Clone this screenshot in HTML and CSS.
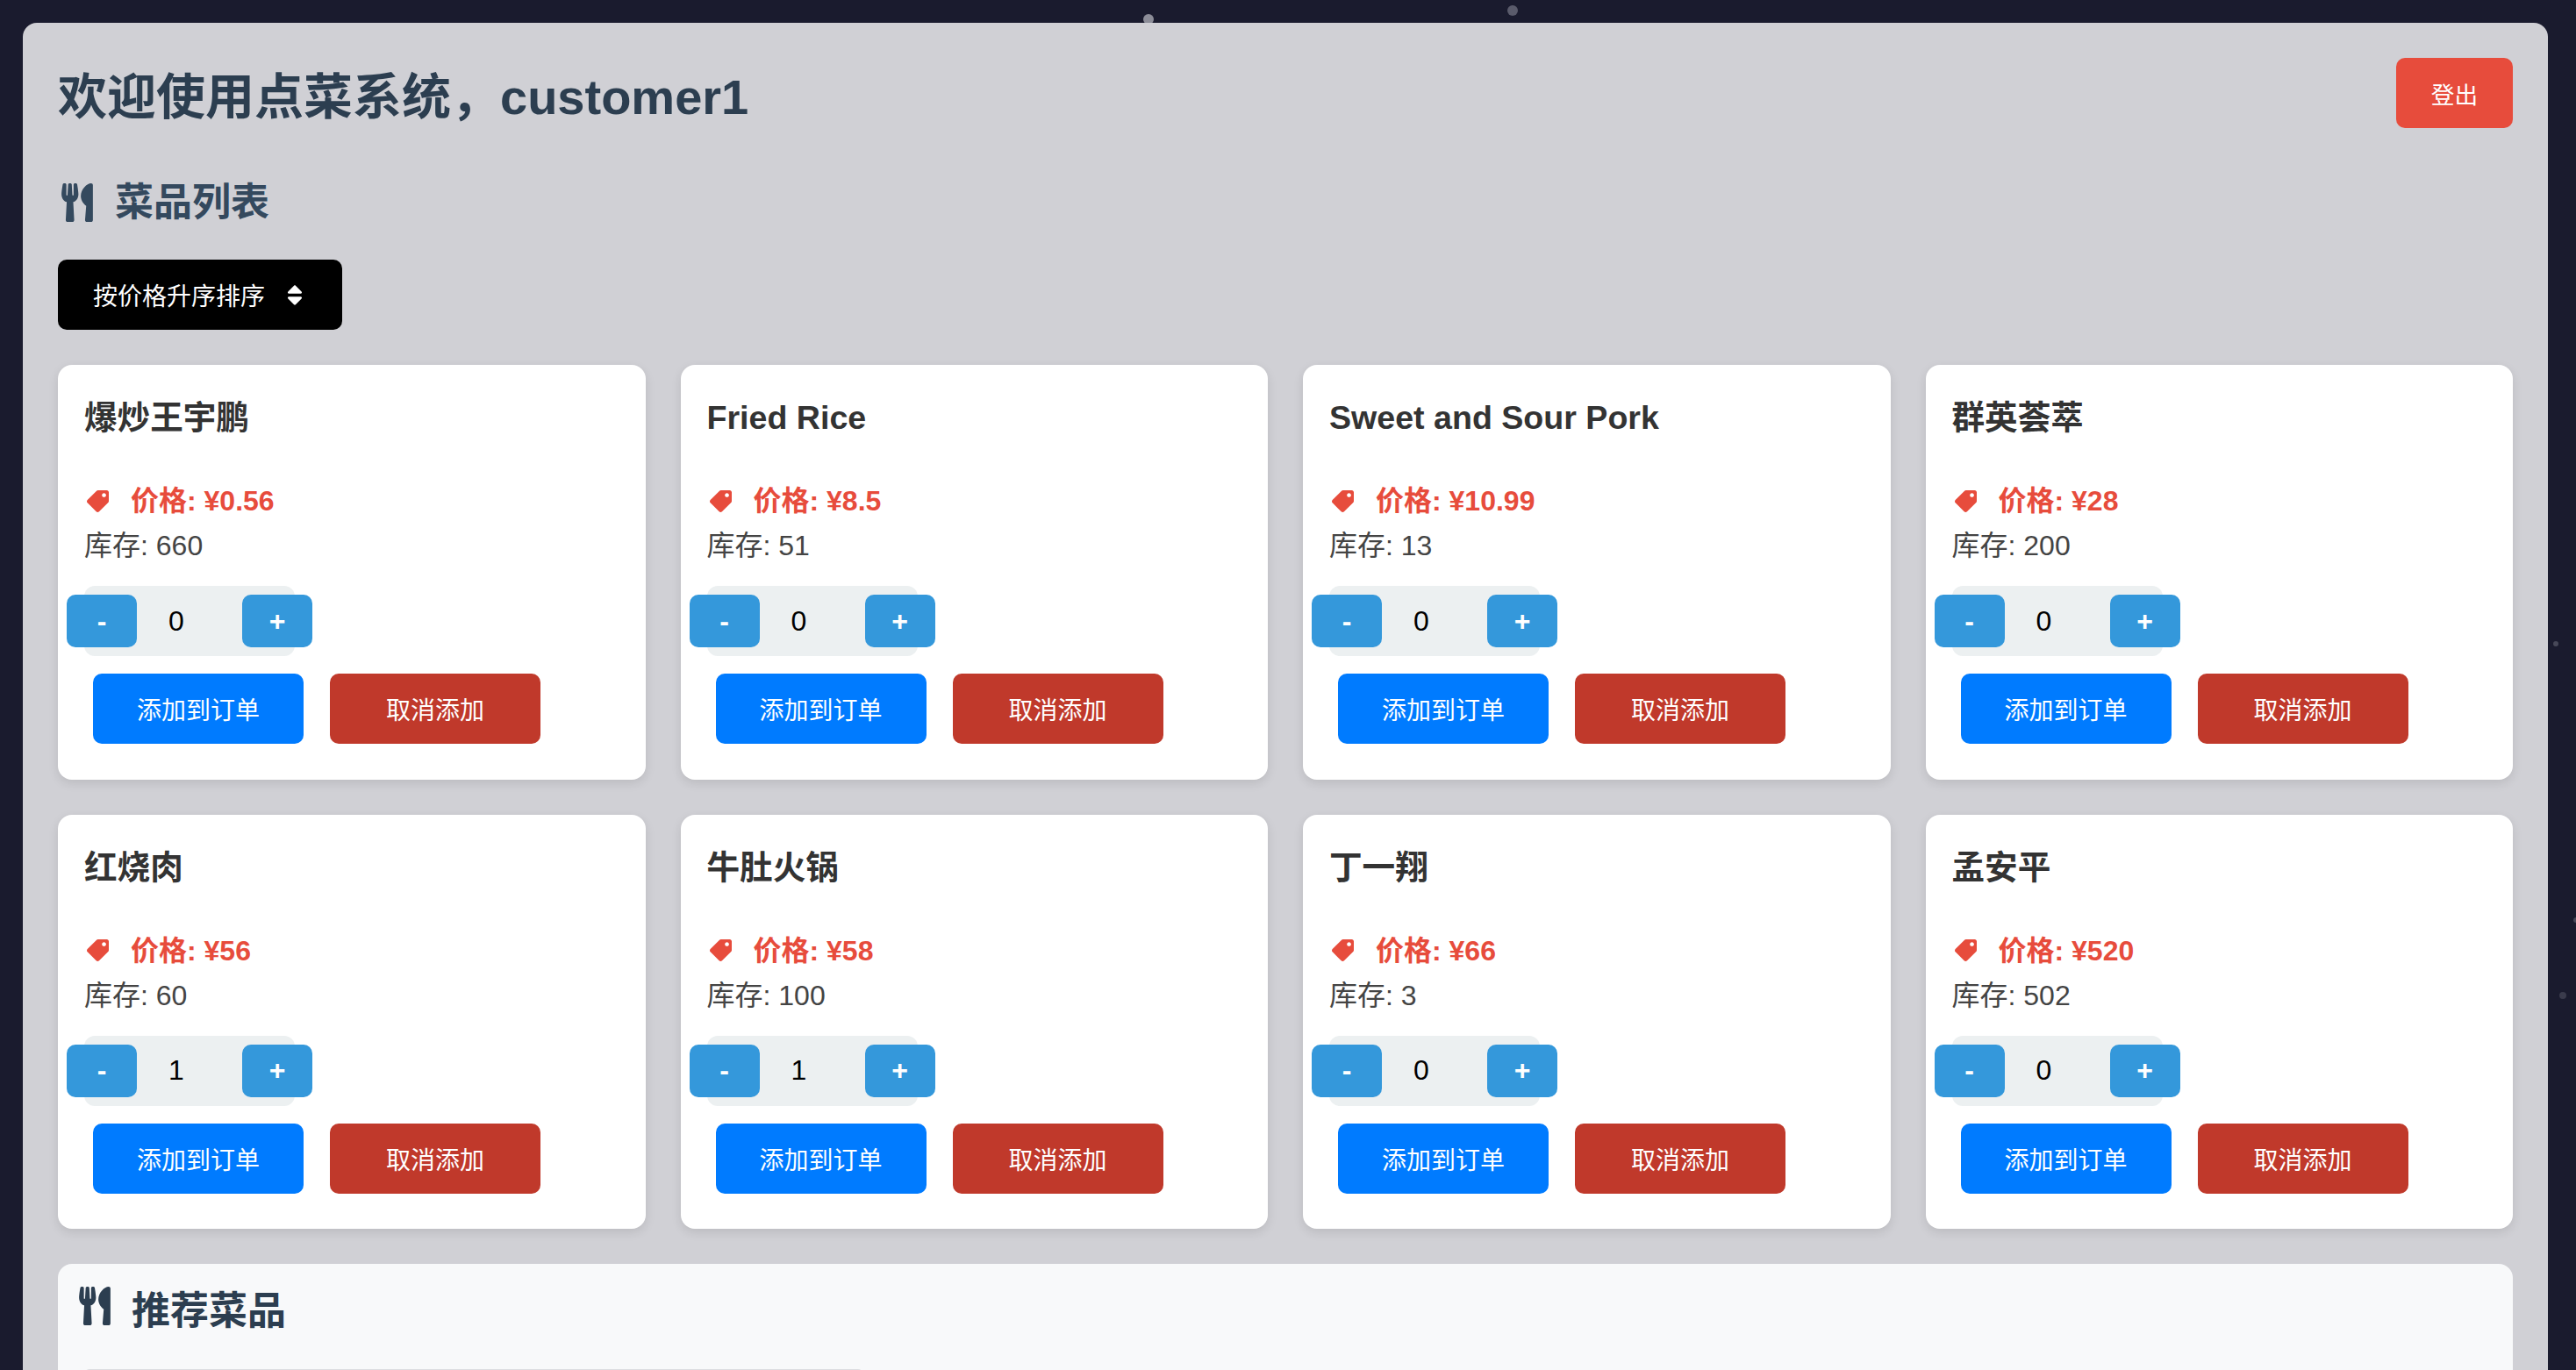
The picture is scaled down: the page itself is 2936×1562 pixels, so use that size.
FILE: index.html
```html
<!DOCTYPE html>
<html lang="zh-CN">
<head>
    <meta charset="UTF-8">
    <meta name="viewport" content="width=device-width, initial-scale=1.0">
    <title>点菜系统</title>
    <link rel="stylesheet" href="styles.css">
</head>
<body>
    <!-- particles behind the panel -->
    <span class="dot dot-a"></span>
    <span class="dot dot-b"></span>
    <span class="dot dot-c"></span>
    <span class="dot dot-d"></span>
    <span class="dot dot-e"></span>

    <svg class="icon-defs" width="0" height="0" aria-hidden="true">
        <symbol id="utensils" viewBox="0 0 416 512">
            <path d="M207.900 15.200c.8 4.700 16.100 94.500 16.100 128.800 0 52.300-27.800 89.600-68.900 104.600L168 486.700c.7 13.700-10.200 25.300-24 25.300H80c-13.700 0-24.700-11.500-24-25.300l12.900-238.100C27.700 233.600 0 196.200 0 144 0 109.600 15.300 19.900 16.100 15.200 19.300-5.100 61.400-5.400 64 16.300v141.200c1.300 3.400 15.100 3.200 16 0 1.400-25.300 7.900-139.200 8-141.800 3.300-20.800 44.700-20.800 47.900 0 .2 2.700 6.600 116.500 8 141.800.9 3.200 14.800 3.400 16 0V16.300c2.600-21.600 44.800-21.400 48-1.100zm119.200 285.700l-15 185.100c-1.200 14 9.900 26 23.900 26h56c13.300 0 24-10.700 24-24V24c0-13.200-10.700-24-24-24-82.500 0-221.400 178.500-64.900 300.900z"/>
        </symbol>
        <symbol id="tag" viewBox="0 0 512 512">
            <path d="M0 252.118V48C0 21.490 21.490 0 48 0h204.118a48 48 0 0 1 33.941 14.059l211.882 211.882c18.745 18.745 18.745 49.137 0 67.882L293.823 497.941c-18.745 18.745-49.137 18.745-67.882 0L14.059 286.059A48 48 0 0 1 0 252.118zM112 64c-26.510 0-48 21.490-48 48s21.490 48 48 48 48-21.490 48-48-21.490-48-48-48z"/>
        </symbol>
        <symbol id="sort" viewBox="0 0 320 512">
            <path d="M41 288h238c21.400 0 32.100 25.900 17 41L177 448c-9.400 9.400-24.600 9.400-33.900 0L24 329c-15.100-15.100-4.400-41 17-41zm255-105L177 64c-9.400-9.400-24.600-9.400-33.900 0L24 183c-15.100 15.100-4.400 41 17 41h238c21.400 0 32.100-25.900 17-41z"/>
        </symbol>
    </svg>

    <div class="container">
        <header class="top-bar">
            <h1>欢迎使用点菜系统，customer1</h1>
            <button class="logout-btn">登出</button>
        </header>

        <h2 class="section-title"><svg class="title-icon"><use href="#utensils"/></svg>菜品列表</h2>

        <button class="sort-btn">按价格升序排序<svg class="sort-icon"><use href="#sort"/></svg></button>

        <div class="dish-grid">
            <div class="dish-card">
                <h3>爆炒王宇鹏</h3>
                <p class="price"><svg class="tag-icon"><use href="#tag"/></svg>价格: ¥0.56</p>
                <p class="stock">库存: 660</p>
                <div class="qty"><button class="qty-btn">-</button><span class="qty-value">0</span><button class="qty-btn">+</button></div>
                <div class="actions"><button class="add-btn">添加到订单</button><button class="cancel-btn">取消添加</button></div>
            </div>
            <div class="dish-card">
                <h3>Fried Rice</h3>
                <p class="price"><svg class="tag-icon"><use href="#tag"/></svg>价格: ¥8.5</p>
                <p class="stock">库存: 51</p>
                <div class="qty"><button class="qty-btn">-</button><span class="qty-value">0</span><button class="qty-btn">+</button></div>
                <div class="actions"><button class="add-btn">添加到订单</button><button class="cancel-btn">取消添加</button></div>
            </div>
            <div class="dish-card">
                <h3>Sweet and Sour Pork</h3>
                <p class="price"><svg class="tag-icon"><use href="#tag"/></svg>价格: ¥10.99</p>
                <p class="stock">库存: 13</p>
                <div class="qty"><button class="qty-btn">-</button><span class="qty-value">0</span><button class="qty-btn">+</button></div>
                <div class="actions"><button class="add-btn">添加到订单</button><button class="cancel-btn">取消添加</button></div>
            </div>
            <div class="dish-card">
                <h3>群英荟萃</h3>
                <p class="price"><svg class="tag-icon"><use href="#tag"/></svg>价格: ¥28</p>
                <p class="stock">库存: 200</p>
                <div class="qty"><button class="qty-btn">-</button><span class="qty-value">0</span><button class="qty-btn">+</button></div>
                <div class="actions"><button class="add-btn">添加到订单</button><button class="cancel-btn">取消添加</button></div>
            </div>
            <div class="dish-card">
                <h3>红烧肉</h3>
                <p class="price"><svg class="tag-icon"><use href="#tag"/></svg>价格: ¥56</p>
                <p class="stock">库存: 60</p>
                <div class="qty"><button class="qty-btn">-</button><span class="qty-value">1</span><button class="qty-btn">+</button></div>
                <div class="actions"><button class="add-btn">添加到订单</button><button class="cancel-btn">取消添加</button></div>
            </div>
            <div class="dish-card">
                <h3>牛肚火锅</h3>
                <p class="price"><svg class="tag-icon"><use href="#tag"/></svg>价格: ¥58</p>
                <p class="stock">库存: 100</p>
                <div class="qty"><button class="qty-btn">-</button><span class="qty-value">1</span><button class="qty-btn">+</button></div>
                <div class="actions"><button class="add-btn">添加到订单</button><button class="cancel-btn">取消添加</button></div>
            </div>
            <div class="dish-card">
                <h3>丁一翔</h3>
                <p class="price"><svg class="tag-icon"><use href="#tag"/></svg>价格: ¥66</p>
                <p class="stock">库存: 3</p>
                <div class="qty"><button class="qty-btn">-</button><span class="qty-value">0</span><button class="qty-btn">+</button></div>
                <div class="actions"><button class="add-btn">添加到订单</button><button class="cancel-btn">取消添加</button></div>
            </div>
            <div class="dish-card">
                <h3>孟安平</h3>
                <p class="price"><svg class="tag-icon"><use href="#tag"/></svg>价格: ¥520</p>
                <p class="stock">库存: 502</p>
                <div class="qty"><button class="qty-btn">-</button><span class="qty-value">0</span><button class="qty-btn">+</button></div>
                <div class="actions"><button class="add-btn">添加到订单</button><button class="cancel-btn">取消添加</button></div>
            </div>
        </div>

        <section class="recommend">
            <h2><svg class="title-icon"><use href="#utensils"/></svg>推荐菜品</h2>
            <div class="recommend-item"></div>
        </section>
    </div>
</body>
</html>
```

FILE: styles.css
```css
html, body {
    height: 100%;
}

body {
    margin: 0;
    padding: 26px 32px 0 26px;
    box-sizing: border-box;
    height: 1562px;
    overflow: hidden;
    position: relative;
    background-color: #1a1b2e;
    font-family: "Liberation Sans", "Noto Sans CJK SC", sans-serif;
    color: #333;
}

/* Particles on the dark background */
.dot {
    position: absolute;
    border-radius: 50%;
}

.dot-a { left: 1303px; top: 16px; width: 12px; height: 12px; background-color: #8c8d98; }
.dot-b { left: 1718px; top: 6px; width: 12px; height: 12px; background-color: #5a5b6b; }
.dot-c { left: 2910px; top: 731px; width: 6px; height: 6px; background-color: #474858; }
.dot-d { left: 2917px; top: 1131px; width: 8px; height: 8px; background-color: #3a3b4c; }
.dot-e { left: 2933px; top: 1046px; width: 6px; height: 6px; background-color: #474858; }

.icon-defs {
    position: absolute;
}

.container {
    position: relative;
    padding: 40px;
    min-height: 1600px;
    background-color: #d0d0d5;
    border-radius: 16px;
}

.top-bar {
    display: flex;
    justify-content: space-between;
    align-items: flex-start;
}

h1 {
    margin: 0;
    padding-top: 12px;
    font-size: 56px;
    line-height: 66px;
    color: #2c3e50;
}

button {
    border: none;
    font-family: inherit;
    color: #fff;
}

.logout-btn {
    width: 133px;
    height: 80px;
    font-size: 26.67px;
    background-color: #e74c3c;
    border-radius: 10px;
}

.section-title {
    display: flex;
    align-items: center;
    margin: 59px 0 39px;
    font-size: 44px;
    line-height: 52px;
    color: #34495e;
}

.title-icon {
    width: 36px;
    height: 44px;
    margin: 0 25px 0 4px;
    fill: currentColor;
}

.sort-btn {
    display: flex;
    align-items: center;
    width: 324px;
    height: 80px;
    padding: 0 40px;
    font-size: 28px;
    background-color: #000;
    border-radius: 10px;
}

.sort-icon {
    flex: none;
    width: 18px;
    height: 29px;
    margin-left: 25px;
    fill: #fff;
}

.dish-grid {
    display: grid;
    grid-template-columns: repeat(4, 1fr);
    gap: 40px;
    margin-top: 40px;
}

.dish-card {
    height: 472.5px;
    padding: 37px 30px 30px;
    box-sizing: border-box;
    background-color: #fff;
    border-radius: 16px;
    box-shadow: 0 4px 12px rgba(0, 0, 0, 0.1);
}

.dish-card h3 {
    margin: 0;
    font-size: 37.6px;
    line-height: 46px;
    color: #333;
}

.price {
    display: flex;
    align-items: center;
    margin: 52px 0 0;
    font-size: 32px;
    line-height: 40px;
    font-weight: bold;
    color: #e74c3c;
}

.tag-icon {
    width: 25px;
    height: 25px;
    margin: 0 25px 0 3px;
    fill: currentColor;
    transform: scaleX(-1);
}

.stock {
    margin: 11px 0 0;
    font-size: 32px;
    line-height: 40px;
    color: #444;
}

.qty {
    display: flex;
    align-items: center;
    width: 240px;
    height: 80px;
    margin-top: 26px;
    background-color: #ecf0f1;
    border-radius: 12px;
}

.qty-btn {
    flex: none;
    width: 80px;
    height: 60px;
    padding: 0;
    font-size: 32px;
    font-weight: bold;
    background-color: #3498db;
    border-radius: 10px;
}

.qty-btn:first-child {
    margin-left: -20px;
}

.qty-value {
    flex: none;
    width: 90px;
    margin-right: 30px;
    font-size: 32px;
    text-align: center;
    color: #000;
}

.actions {
    display: flex;
    gap: 30px;
    margin: 20px 0 0 10px;
}

.add-btn,
.cancel-btn {
    width: 240px;
    height: 80px;
    padding: 0;
    font-size: 28px;
    border-radius: 10px;
}

.add-btn {
    background-color: #007bff;
}

.cancel-btn {
    background-color: #c0392b;
}

.recommend {
    margin-top: 40px;
    padding: 26px 24px;
    height: 400px;
    background-color: #f8f9fa;
    border-radius: 16px;
}

.recommend h2 {
    display: flex;
    align-items: flex-start;
    margin: 0;
    font-size: 44px;
    line-height: 56px;
    color: #2c3e50;
}

.recommend .title-icon {
    margin: 0 24px 0 0;
}

.recommend-item {
    width: 888px;
    height: 200px;
    margin: 38px 0 0 6px;
    background-color: #f8f9fa;
    border-radius: 6px;
    border-top: 2px solid #dcdde0;
}
```
